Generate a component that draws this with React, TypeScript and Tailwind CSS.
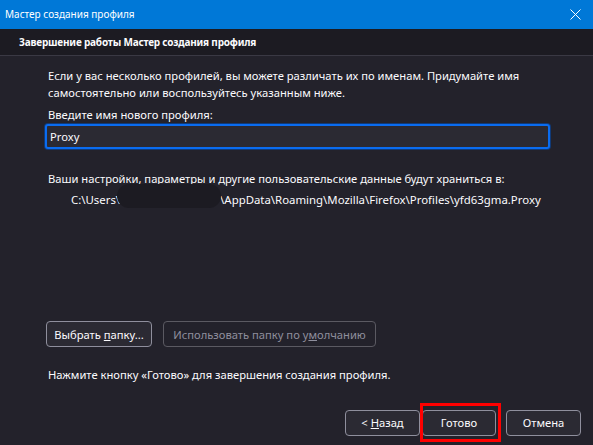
import React from "react";

const font = { fontFamily: '"Noto Sans", "Liberation Sans", sans-serif' };

function Btn({
  children,
  disabled,
  className = "",
}: {
  children: React.ReactNode;
  disabled?: boolean;
  className?: string;
}) {
  return (
    <div
      className={
        "flex h-[26px] items-center justify-center rounded-[4px] border text-[11.2px] " +
        (disabled
          ? "border-[#5b5a62] text-[#8f8f9d] bg-[#23222b] "
          : "border-[#8f8f9d] text-[#fbfbfe] bg-[#2b2a33] ") +
        className
      }
    >
      <span className="whitespace-pre">{children}</span>
    </div>
  );
}

export default function App() {
  return (
    <div
      className="flex h-[445px] w-[593px] flex-col overflow-hidden bg-[#23222b] text-[#fbfbfe]"
      style={font}
    >
      {/* window title bar */}
      <div className="flex h-[29px] shrink-0 items-center justify-between bg-[#0078d7] pl-[5px] pr-[12px] text-[10px] text-white">
        <span>Мастер создания профиля</span>
        <svg width="11" height="11" viewBox="0 0 11 11" className="text-white">
          <path d="M0.5 0.5 L10.5 10.5 M10.5 0.5 L0.5 10.5" stroke="currentColor" strokeWidth="1" />
        </svg>
      </div>

      {/* wizard page header */}
      <div className="flex h-[27px] shrink-0 items-center border-b border-[#3a3944] bg-[#1c1b22] pl-[19px] text-[10px] font-bold tracking-[-0.2px]">
        Завершение работы Мастер создания профиля
      </div>

      {/* wizard page body */}
      <div className="flex flex-1 flex-col px-[45px] pt-[11px] text-[11.2px] leading-[17px]">
        <p className="pl-[3px]">
          Если у вас несколько профилей, вы можете различать их по именам. Придумайте имя
          самостоятельно или воспользуйтесь указанным ниже.
        </p>
        <p className="mt-[5px] pl-[3px]">
          Вве<span className="underline">д</span>ите имя нового профиля:
        </p>
        <div className="mt-[1px] flex h-[25px] w-[505px] items-center rounded-[3px] border-2 border-[#0a6cf0] bg-[#2b2a33] pl-[3px] shadow-[0_0_0_1px_#103a78]">
          Proxy
        </div>
        <p className="mt-[21px] pl-[3px]">
          Ваши настройки, параметры и другие пользовательские данные будут храниться в:
        </p>
        <div className="relative mt-[4px] whitespace-nowrap pl-[26px] text-[11.4px]">
          C:\Users\<span className="inline-block w-[100px]"></span>\AppData\Roaming\Mozilla\Firefox\Profiles\yfd63gma.Proxy
          <div className="absolute left-[72px] top-[-7px] h-[24px] w-[104px] rounded-full bg-[#1c1b22]" />
        </div>

        <div className="mt-auto flex gap-[11px] pl-[1px]">
          <Btn className="w-[106px]">
            Выбрать <span className="underline">п</span>апку...
          </Btn>
          <Btn disabled className="w-[213px]">
            Использовать папку по у<span className="underline">м</span>олчанию
          </Btn>
        </div>
        <p className="mt-[19px] mb-[27px] pl-[3px]">
          Нажмите кнопку «Готово» для завершения создания профиля.
        </p>
      </div>

      {/* navigation buttons */}
      <div className="flex h-[35px] shrink-0 items-start justify-end gap-[10px] pr-[12px]">
        <div className="flex">
          <Btn className="w-[75px]">
            &lt; <span className="underline">Н</span>азад
          </Btn>
          <div className="relative ml-[2px]">
            <Btn className="w-[74px]">Готово</Btn>
            <div className="pointer-events-none absolute left-[-2px] top-[-7px] h-[39px] w-[81px] border-[3px] border-[#ff0000]" />
          </div>
        </div>
        <Btn className="w-[75px]">Отмена</Btn>
      </div>
    </div>
  );
}
